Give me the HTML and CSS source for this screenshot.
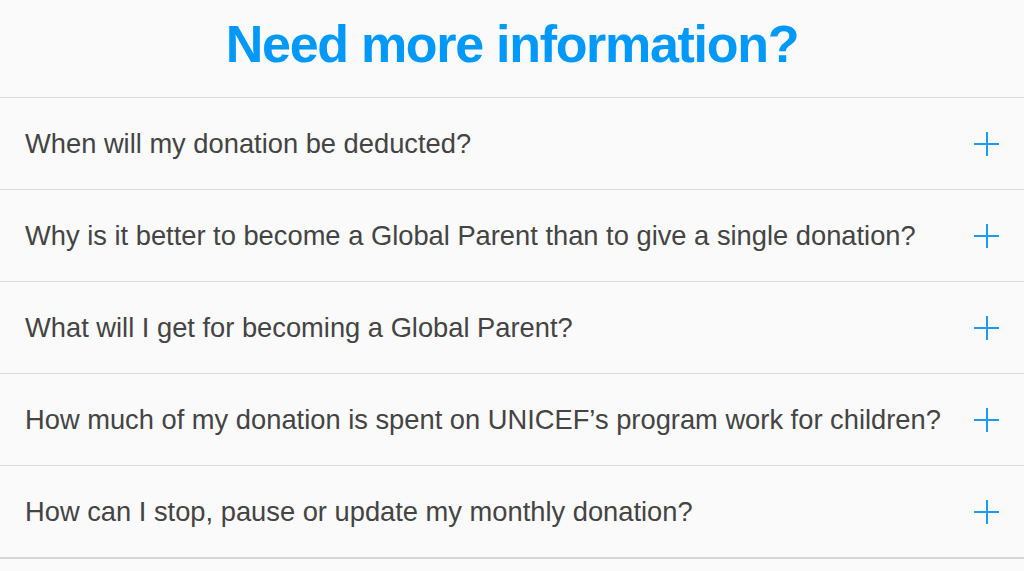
FILE: index.html
```html
<!DOCTYPE html>
<html lang="en">
<head>
<meta charset="utf-8">
<title>Need more information?</title>
<link rel="stylesheet" href="styles.css">
</head>
<body>
<section class="faq">
  <h1 class="faq-title">Need more information?</h1>
  <ul class="faq-list">
    <li class="faq-item"><span class="faq-q">When will my donation be deducted?</span><span class="faq-plus"></span></li>
    <li class="faq-item"><span class="faq-q">Why is it better to become a Global Parent than to give a single donation?</span><span class="faq-plus"></span></li>
    <li class="faq-item"><span class="faq-q">What will I get for becoming a Global Parent?</span><span class="faq-plus"></span></li>
    <li class="faq-item"><span class="faq-q">How much of my donation is spent on UNICEF’s program work for children?</span><span class="faq-plus"></span></li>
    <li class="faq-item"><span class="faq-q">How can I stop, pause or update my monthly donation?</span><span class="faq-plus"></span></li>
  </ul>
</section>
</body>
</html>
```
FILE: styles.css
```css
html, body {
  margin: 0;
  padding: 0;
  background: #fafafa;
  font-family: "Liberation Sans", Arial, sans-serif;
}
.faq-title {
  margin: 0;
  display: flex;
  align-items: center;
  justify-content: center;
  font-size: 52px;
  letter-spacing: -1.3px;
  font-weight: bold;
  color: #0099fa;
  border-bottom: 1px solid #dcdcdc;
  padding-bottom: 10px;
  box-sizing: border-box;
  height: 98px;
}
.faq-list {
  list-style: none;
  margin: 0;
  padding: 0;
}
.faq-item {
  height: 91px;
  border-bottom: 1px solid #dcdcdc;
  display: flex;
  align-items: center;
  justify-content: space-between;
  padding: 0 25px 0 25px;
}
.faq-item:last-child {
  border-bottom: 2px solid #d6d6d6;
}
.faq-q {
  font-size: 27.3px;
  color: #444;
}
.faq-plus {
  position: relative;
  width: 25px;
  height: 24px;
  flex: none;
}
.faq-plus::before, .faq-plus::after {
  content: "";
  position: absolute;
  background: #1a9cf5;
}
.faq-plus::before {
  left: 0; right: 0; top: 11px; height: 2px;
}
.faq-plus::after {
  top: 0; bottom: 0; left: 12px; width: 2px;
}
```
